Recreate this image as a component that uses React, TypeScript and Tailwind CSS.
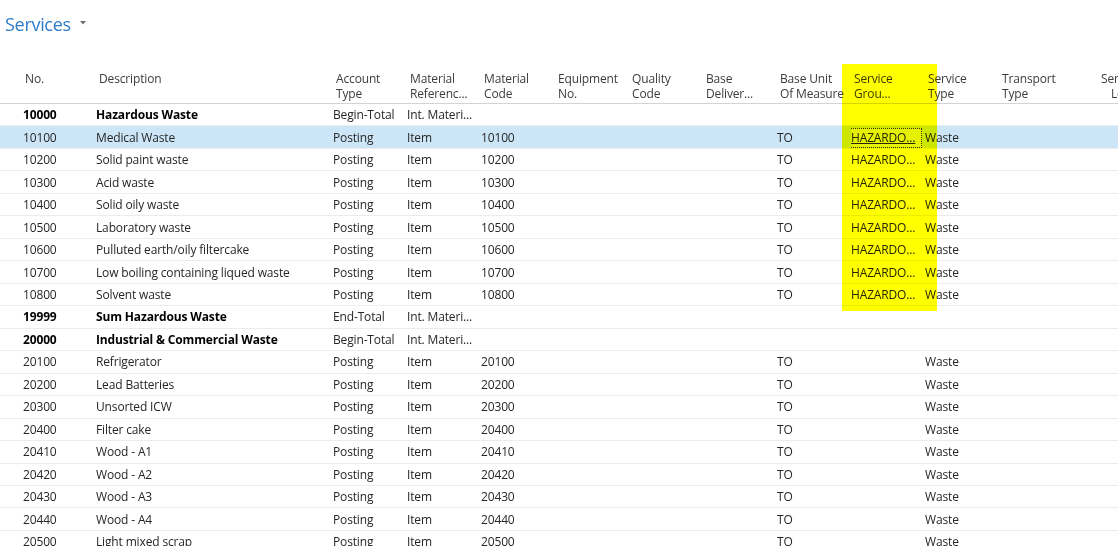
import React from "react";

type Row = {
  no: string;
  desc: string;
  type: string;
  ref: string;
  code?: string;
  uom?: string;
  group?: string;
  svc?: string;
  bold?: boolean;
};

const headers: { w: number; l1: string; l2?: string }[] = [
  { w: 96, l1: "No." },
  { w: 237, l1: "Description" },
  { w: 74, l1: "Account", l2: "Type" },
  { w: 74, l1: "Material", l2: "Referenc..." },
  { w: 74, l1: "Material", l2: "Code" },
  { w: 74, l1: "Equipment", l2: "No." },
  { w: 74, l1: "Quality", l2: "Code" },
  { w: 74, l1: "Base", l2: "Deliver..." },
  { w: 74, l1: "Base Unit", l2: "Of Measure" },
  { w: 74, l1: "Service", l2: "Grou..." },
  { w: 74, l1: "Service", l2: "Type" },
  { w: 74, l1: "Transport", l2: "Type" },
  { w: 74, l1: "Service", l2: "Le..." },
];

const hz = (no: string, desc: string): Row => ({
  no,
  desc,
  type: "Posting",
  ref: "Item",
  code: no,
  uom: "TO",
  group: "HAZARDO...",
  svc: "Waste",
});

const ic = (no: string, desc: string): Row => ({
  no,
  desc,
  type: "Posting",
  ref: "Item",
  code: no,
  uom: "TO",
  svc: "Waste",
});

const rows: Row[] = [
  { no: "10000", desc: "Hazardous Waste", type: "Begin-Total", ref: "Int. Materi...", bold: true },
  hz("10100", "Medical Waste"),
  hz("10200", "Solid paint waste"),
  hz("10300", "Acid waste"),
  hz("10400", "Solid oily waste"),
  hz("10500", "Laboratory waste"),
  hz("10600", "Pulluted earth/oily filtercake"),
  hz("10700", "Low boiling containing liqued waste"),
  hz("10800", "Solvent waste"),
  { no: "19999", desc: "Sum Hazardous Waste", type: "End-Total", ref: "Int. Materi...", bold: true },
  { no: "20000", desc: "Industrial & Commercial Waste", type: "Begin-Total", ref: "Int. Materi...", bold: true },
  ic("20100", "Refrigerator"),
  ic("20200", "Lead Batteries"),
  ic("20300", "Unsorted ICW"),
  ic("20400", "Filter cake"),
  ic("20410", "Wood - A1"),
  ic("20420", "Wood - A2"),
  ic("20430", "Wood - A3"),
  ic("20440", "Wood - A4"),
  ic("20500", "Light mixed scrap"),
];

function Cell({ w, children, className = "" }: { w: number; children?: React.ReactNode; className?: string }) {
  return (
    <div className={"shrink-0 overflow-hidden whitespace-nowrap " + className} style={{ width: w }}>
      {children}
    </div>
  );
}

export default function App() {
  return (
    <div
      className="relative w-[1118px] h-[546px] overflow-hidden bg-white text-[12px] tracking-[-0.15px] text-[#262626]"
      style={{ fontFamily: '"Open Sans", "Noto Sans", sans-serif' }}
    >
      <div className="flex items-center gap-[9px] pl-[5px] pt-[10px] h-[38px]">
        <span className="text-[18px] leading-none tracking-[-0.3px] text-[#2f7bc8]">Services</span>
        <svg width="6" height="4" viewBox="0 0 6 4" className="mt-[-3px]">
          <path d="M0 0 L6 0 L3 3.5 Z" fill="#707070" />
        </svg>
      </div>

      {/* header */}
      <div className="flex items-start mt-[33px] h-[33px] border-b border-[#d4d4d4] text-[#3c3c3c] leading-[15px]">
        {headers.map((h, i) => (
          <Cell key={i} w={h.w} className={i === 0 ? "pl-[25px]" : i === 12 ? "pl-[28px]" : "pl-[3px]"}>
            <div>{h.l1}</div>
            {h.l2 && <div className={i === 12 ? "pl-[10px]" : ""}>{h.l2}</div>}
          </Cell>
        ))}
      </div>

      {/* rows */}
      {rows.map((r, idx) => {
        const selected = idx === 1;
        return (
          <div
            key={r.no}
            className={
              "flex items-center pt-[1px] h-[22.47px] border-b border-[#ececec] " +
              (selected ? "bg-[#cde6f7]" : "") +
              (r.bold ? " font-bold text-black" : "")
            }
          >
            <Cell w={96} className="pl-[23px]">{r.no}</Cell>
            <Cell w={237}>{r.desc}</Cell>
            <Cell w={74} className="font-normal text-[#262626]">{r.type}</Cell>
            <Cell w={74} className="font-normal text-[#262626]">{r.ref}</Cell>
            <Cell w={74}>{r.code}</Cell>
            <Cell w={74} />
            <Cell w={74} />
            <Cell w={74} />
            <Cell w={74}>{r.uom}</Cell>
            <Cell w={74} className={selected ? "pr-[3px]" : ""}>
              {selected ? (
                <span className="block h-[20px] leading-[18px] -ml-[3px] pl-[2px] border border-dotted border-[#333] bg-[#e5f1fb] underline">
                  {r.group}
                </span>
              ) : (
                r.group
              )}
            </Cell>
            <Cell w={74}>{r.svc}</Cell>
            <Cell w={74} />
            <Cell w={74} />
          </div>
        );
      })}

      {/* highlighter mark */}
      <div className="absolute left-[842px] top-[64px] w-[95px] h-[247px] bg-[#ffff00] mix-blend-multiply pointer-events-none" />
    </div>
  );
}
